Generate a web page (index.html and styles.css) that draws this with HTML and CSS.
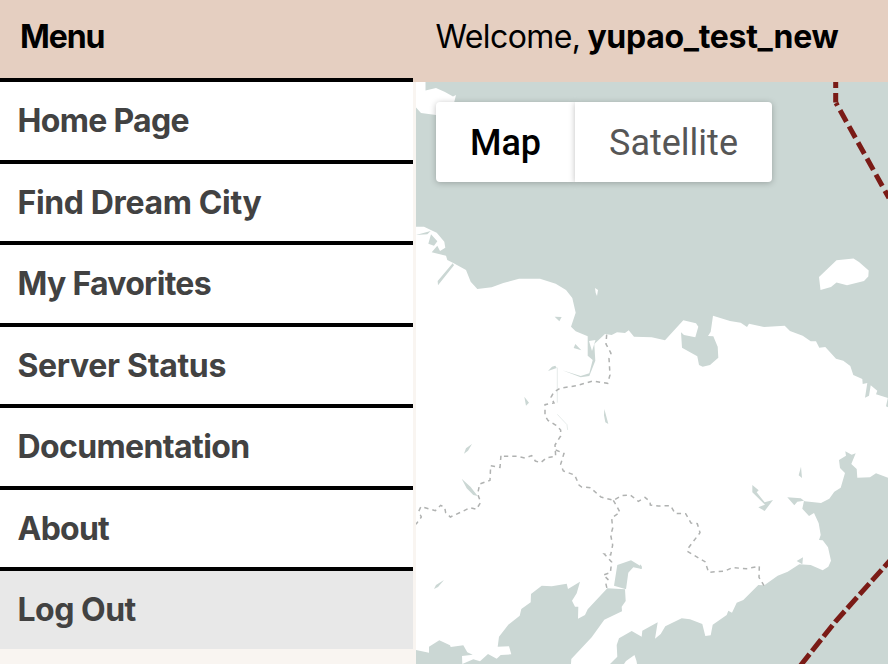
FILE: index.html
```html
<!DOCTYPE html>
<html lang="en">
<head>
<meta charset="utf-8">
<title>Dream City</title>
<link rel="stylesheet" href="styles.css">
</head>
<body>
<header class="topbar">
  <div class="menu-title"><span class="t-menu">Menu</span></div>
  <div class="welcome"><span class="t-welcome">Welcome,</span> <strong>yupao_test_new</strong></div>
</header>
<div class="content">
  <nav class="menu">
    <a class="item"><span class="t-home">Home Page</span></a>
    <a class="item"><span class="t-find">Find Dream City</span></a>
    <a class="item"><span class="t-fav">My Favorites</span></a>
    <a class="item"><span class="t-server">Server Status</span></a>
    <a class="item"><span class="t-docs">Documentation</span></a>
    <a class="item"><span class="t-about">About</span></a>
    <a class="item active"><span class="t-logout">Log Out</span></a>
  </nav>
  <main class="map">
    <svg class="tiles" viewBox="416 82 472 582" width="472" height="582" aria-hidden="true">
      <!-- mainland -->
      <path class="land" d="M416 226.7L424 226.7 436.7 232.7 444.3 241.7 445.3 247.7 440 251 437.3 245.7 431.7 252.3 446 255.7 447.3 260 453.3 263 466 270 470.7 281.7 477.3 289 491.7 287.3 503.3 283 519 278.7H540L555.7 283.7 566 290 572.3 298 575.7 312.7 571 326.7 575.7 331.3 587.7 336.3V355.7L592.7 360 589.3 373.3 580.7 376 562.3 370.3 580.7 377.3 589.3 376 595.3 360.7 594.3 344 605 334 611.7 335 617 332.3 625 333 628.7 330.3 634 336.7 651.7 337.3 665 340.3 683.3 320.3 696 323.3 698.3 326.7 695.3 337.3 684 335 681 332.3 682 347.7 697.3 356.3 699 365 702.7 366.7 710 365 718.3 357.7 717.7 346.7 713.3 336.3 708 336 710.7 331.7 713 315.7 730 321 740.7 322.7 747 327 749 323.7 764 327 784.7 325.7 790 331 802.7 335.7 810.7 341.3H816L819.3 347.7 825.3 347 836 358.7 843.3 360.7 850.3 366 853.3 375 862.3 379 862.7 384 867.3 383 865 397.7 869 395.7 870.7 385.3 877.3 390.7 876 394.3 888 398V477.7L876 473.3 870 477.3 857.3 477.7 856.7 469 851.3 464 855.7 453.3 851.7 454.7 845.3 451.3 846 455.7 839 460 840 468 845 473 840.7 487.7 834.3 491.7 829.3 498.7 821 503 804.7 501.3 800.7 498.3 787.3 497.3 794.3 505.3 797.3 501.7 804 500.7 802.3 508.7 809 516 814 513 818.7 523.3 820.7 535 819 540 822.7 540.3 828 547.3 831 560.7 828.3 566.7 822.7 570.3 810.7 565 799.3 564.3 787.7 571.7 777.7 575.7 764.3 585.3 758.3 585 743.3 600 736.7 602.7 732 612.7 728.3 610.7 726.7 615 712.7 624.7 710.7 635.3 705.3 636 702.3 624 690 619.3 681.7 618.3 665.3 626.3 660.7 634 655 638.7 657.7 622.3 642.3 630.7 641.7 636.7 631.7 631 619 638.3 616.7 645 617.3 656.7 610 664H571L571.3 659 591.7 637.3 604.3 619.7 622 611.3 621.7 606.7 625.7 601 625 589.3 607.3 588.3 587.7 609.3 585 615 578 618.7 578.3 606.7H575L572 600.7 576.7 593.3 580 581.7 568 589 566.7 583.7 551.7 586.3 541.7 585.7 531 594 530.7 602.3 521.3 609 519.7 615.7 508.3 624.7 499 636.7 497.7 646.7 509 646.3 511.3 654.3 500.7 655 496.7 658.7 488 654 480 661.3 473.3 659.3 462.3 664 462 656 472.7 654.7 467.3 652.3 463.3 645.3 450.7 647 450 645.3 439.3 640.3 429 646.7V652.7L416 650Z"/>
      <!-- islands -->
      <path class="land" d="M416 82H425.5V90.5L436 88 445 92 453 96.500 456 95 454 103 450 115H436L421 113 416 107.500Z"/>
      <path class="land" d="M819 277L836.500 260.300 853.500 258.500 859 262 868.700 270.500 868.300 276.500 864 281 847 285.300 836.500 282.500 831 287 820.500 290Z"/>
      <path class="land" d="M595 288L598 290 597 296 595.700 293ZM589 341L595.500 340 592 351ZM624 664L626 661 634.500 655 636.500 661 637 664Z"/>
      <!-- inland water -->
      <path class="water" d="M617.300 565L631 560.300 641.700 566.700V569L633.300 567.300 628.300 572.700 626 589.300 614 585.700Z"/>
      <g transform="translate(410 200) scale(.33333)">
        <path class="water" d="M18 105L62 93 52 103ZM63 103L82 124 72 137 55 131ZM128 190L132 196 84 256 83 243ZM434 350L455 351 448 364ZM496 432L514 451 491 444ZM414 513L426 500 436 497 440 504ZM343 590L357 608 348 617ZM186 732L174 752 162 761 168 745ZM155 836L182 861 203 888 190 885 170 865ZM583 627L595 672 586 667 582 646Z"/>
        <path class="creek" d="M442 503V608M442 643L471 674 473 690"/>
      </g>
      <g transform="translate(640 370) scale(.33333)">
        <path class="water" d="M337 345L356 361 350 367 374 397 399 390 374 423 355 412 375 404 337 367ZM483 290L486 324 476 316ZM744 82V112L738 109ZM470 573L489 562 487 583ZM0 583L5 588V596H0Z"/>
      </g>
      <path class="water" d="M444 580L436 585 434 589 438 587Z"/>
      <!-- regional borders -->
      <g transform="translate(410 370) scale(.33333)">
        <path class="border" d="M590-106L588-78 603-50 597-35 600 15 593 40 548 33 500 47 450 55 431 67 423 82 432 99 405 104 405 137 414 151 438 166 452 180 452 198 435 225 437 259 410 263 392 278 376 273 365 257 345 264 322 259 280 259 273 255 270 292 242 287 240 331 209 342 203 372 212 397 199 418 180 413 156 425 121 441 107 428 104 412 92 406 76 422 33 410 26 424 34 441 18 463"/>
        <path class="border" d="M437 240L462 250 452 283 460 303 494 315 507 345 515 351 541 353 573 381 610 391 635 377 661 375 685 394 705 382 720 395 721 405 745 408 768 407 782 407 795 430 827 431 843 459 862 461 870 488 835 534 832 544 885 575 896 607 945 603 967 593 1010 596 1048 589 1047 622 1062 647"/>
        <path class="border" d="M610 391L620 408 630 427 605 444 608 475 602 495 608 525 602 555 583 552 605 576 601 608 580 615 594 628 587 638 592 660"/>
      </g>
      <!-- date line -->
      <path class="boundary" d="M835.700 82V88M835.700 93V102.500"/>
      <path class="boundary diag" d="M836 103L889 198"/>
      <path class="boundary south" d="M800.500 665.500L835.500 621.500 890 560.500"/>
    </svg>
    <div class="switch">
      <button class="tab on">Map</button><button class="tab">Satellite</button>
    </div>
  </main>
</div>
</body>
</html>
```
FILE: styles.css
```css
* { box-sizing: border-box; }
body {
  margin: 0;
  height: 664px;
  overflow: hidden;
  background: #f9f5f1;
  color: #000;
  font-family: Inter, "Liberation Sans", sans-serif;
  font-size: 32px;
}
.topbar {
  display: flex;
  height: 82px;
  background: #e5cfc1;
  line-height: 74px;
  white-space: nowrap;
}
.menu-title {
  width: 413px;
  height: 82px;
  padding-left: 20px;
  border-bottom: 4px solid #000;
  font-weight: 700;
}
.welcome { padding-left: 22.5px; word-spacing: -2px; }
.welcome strong { letter-spacing: -.3px; }
.t-welcome { letter-spacing: -.6px; }
.t-menu { letter-spacing: -1.1px; }
.t-home { letter-spacing: -.7px; }
.t-find { letter-spacing: -.36px; }
.t-fav { letter-spacing: -.7px; }
.t-server { letter-spacing: -.33px; }
.t-docs { letter-spacing: -.62px; }
.t-about { letter-spacing: -.75px; }
.t-logout { letter-spacing: -.5px; }
.content { display: flex; height: 582px; }
.menu { width: 413px; margin-right: 3px; }
.item {
  display: block;
  height: 81.5px;
  padding-left: 17.5px;
  border-bottom: 4px solid #000;
  background: #fff;
  color: #424242;
  font-weight: 700;
  line-height: 77.500px;
}
.item.active { height: 78px; border: 0; background: #e8e8e8; }
.map {
  position: relative;
  width: 472px;
  background: #cbd7d4;
}
.tiles { display: block; }
.land { fill: #fff; }
.water { fill: #cbd7d4; }
.creek { fill: none; stroke: #dbe3e1; stroke-width: 2; }
.border { fill: none; stroke: #b0b2b1; stroke-width: 4.5; stroke-dasharray: 13 12; }
.boundary { fill: none; stroke: #7a1b16; stroke-width: 5; }
.diag { stroke-dasharray: 13 5.400; stroke-dashoffset: 10; }
.south { stroke-dasharray: 14.500 4; }
.switch {
  position: absolute;
  left: 20px;
  top: 20px;
  display: flex;
  height: 80px;
}
.tab {
  width: 197px;
  padding: 2px 0 0;
  border: 0;
  border-radius: 0 4px 4px 0;
  background: #fff;
  box-shadow: 0 1px 6px rgba(0, 0, 0, .25);
  color: #565656;
  font: 36px/78px Roboto, sans-serif;
}
.tab.on {
  width: 139px;
  border-radius: 4px 0 0 4px;
  color: #000;
  font-weight: 500;
}
```
